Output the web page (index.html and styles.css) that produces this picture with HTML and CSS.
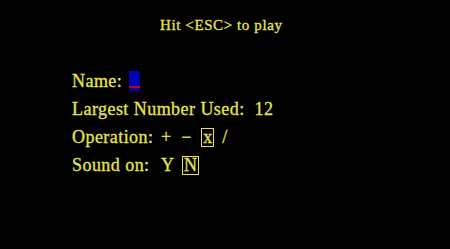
FILE: index.html
```html
<!DOCTYPE html>
<html>
<head>
<meta charset="utf-8">
<link rel="stylesheet" href="styles.css">
</head>
<body>
<div class="screen">
  <div class="title">Hit &lt;ESC&gt; to play</div>
  <div class="menu">
    <div class="row"><span class="name-label">Name:</span><span class="cursor"></span></div>
    <div class="row"><span>Largest Number Used:&nbsp; 12</span></div>
    <div class="row"><span class="label">Operation:</span><span class="opts"><span class="opt">+</span><span class="opt">&minus;</span><span class="opt box">x</span><span class="opt">/</span></span></div>
    <div class="row"><span class="label">Sound on:</span><span class="opts sound"><span class="opt">Y</span><span class="opt box">N</span></span></div>
  </div>
</div>
</body>
</html>
```
FILE: styles.css
```css
html, body {
  margin: 0;
  padding: 0;
  background: #000;
}
.screen {
  width: 450px;
  height: 249px;
  background: #000;
  color: #e6e64c;
  font-family: "Liberation Serif", "Times New Roman", serif;
  -webkit-text-stroke: 0.3px #e6e64c;
  overflow: hidden;
}
.title {
  padding-top: 16px;
  padding-left: 160px;
  font-size: 15px;
  line-height: 18px;
  letter-spacing: 0.6px;
}
.menu {
  margin-top: 33px;
  padding-left: 72px;
  font-size: 18px;
  line-height: 28px;
  letter-spacing: 0.45px;
}
.row {
  display: flex;
  align-items: baseline;
  white-space: pre;
}
.name-label {
  width: 57px;
}
.cursor {
  display: inline-block;
  width: 11px;
  height: 20px;
  align-self: center;
  background: linear-gradient(#0000b4 0, #0000b4 15px, #c80000 15px, #c80000 17px, #0000b4 17px);
}
.label {
  width: 89px;
}
.opts {
  display: flex;
  align-items: baseline;
  gap: 10px;
  letter-spacing: 0;
}
.sound {
  gap: 8px;
}
.opt.box {
  display: inline-block;
  min-width: 13px;
  padding: 0 1px;
  line-height: 17px;
  text-align: center;
  border: 1px solid #e6e64c;
  box-sizing: border-box;
}
.opts .box + .opt {
  margin-left: -2px;
}
```
